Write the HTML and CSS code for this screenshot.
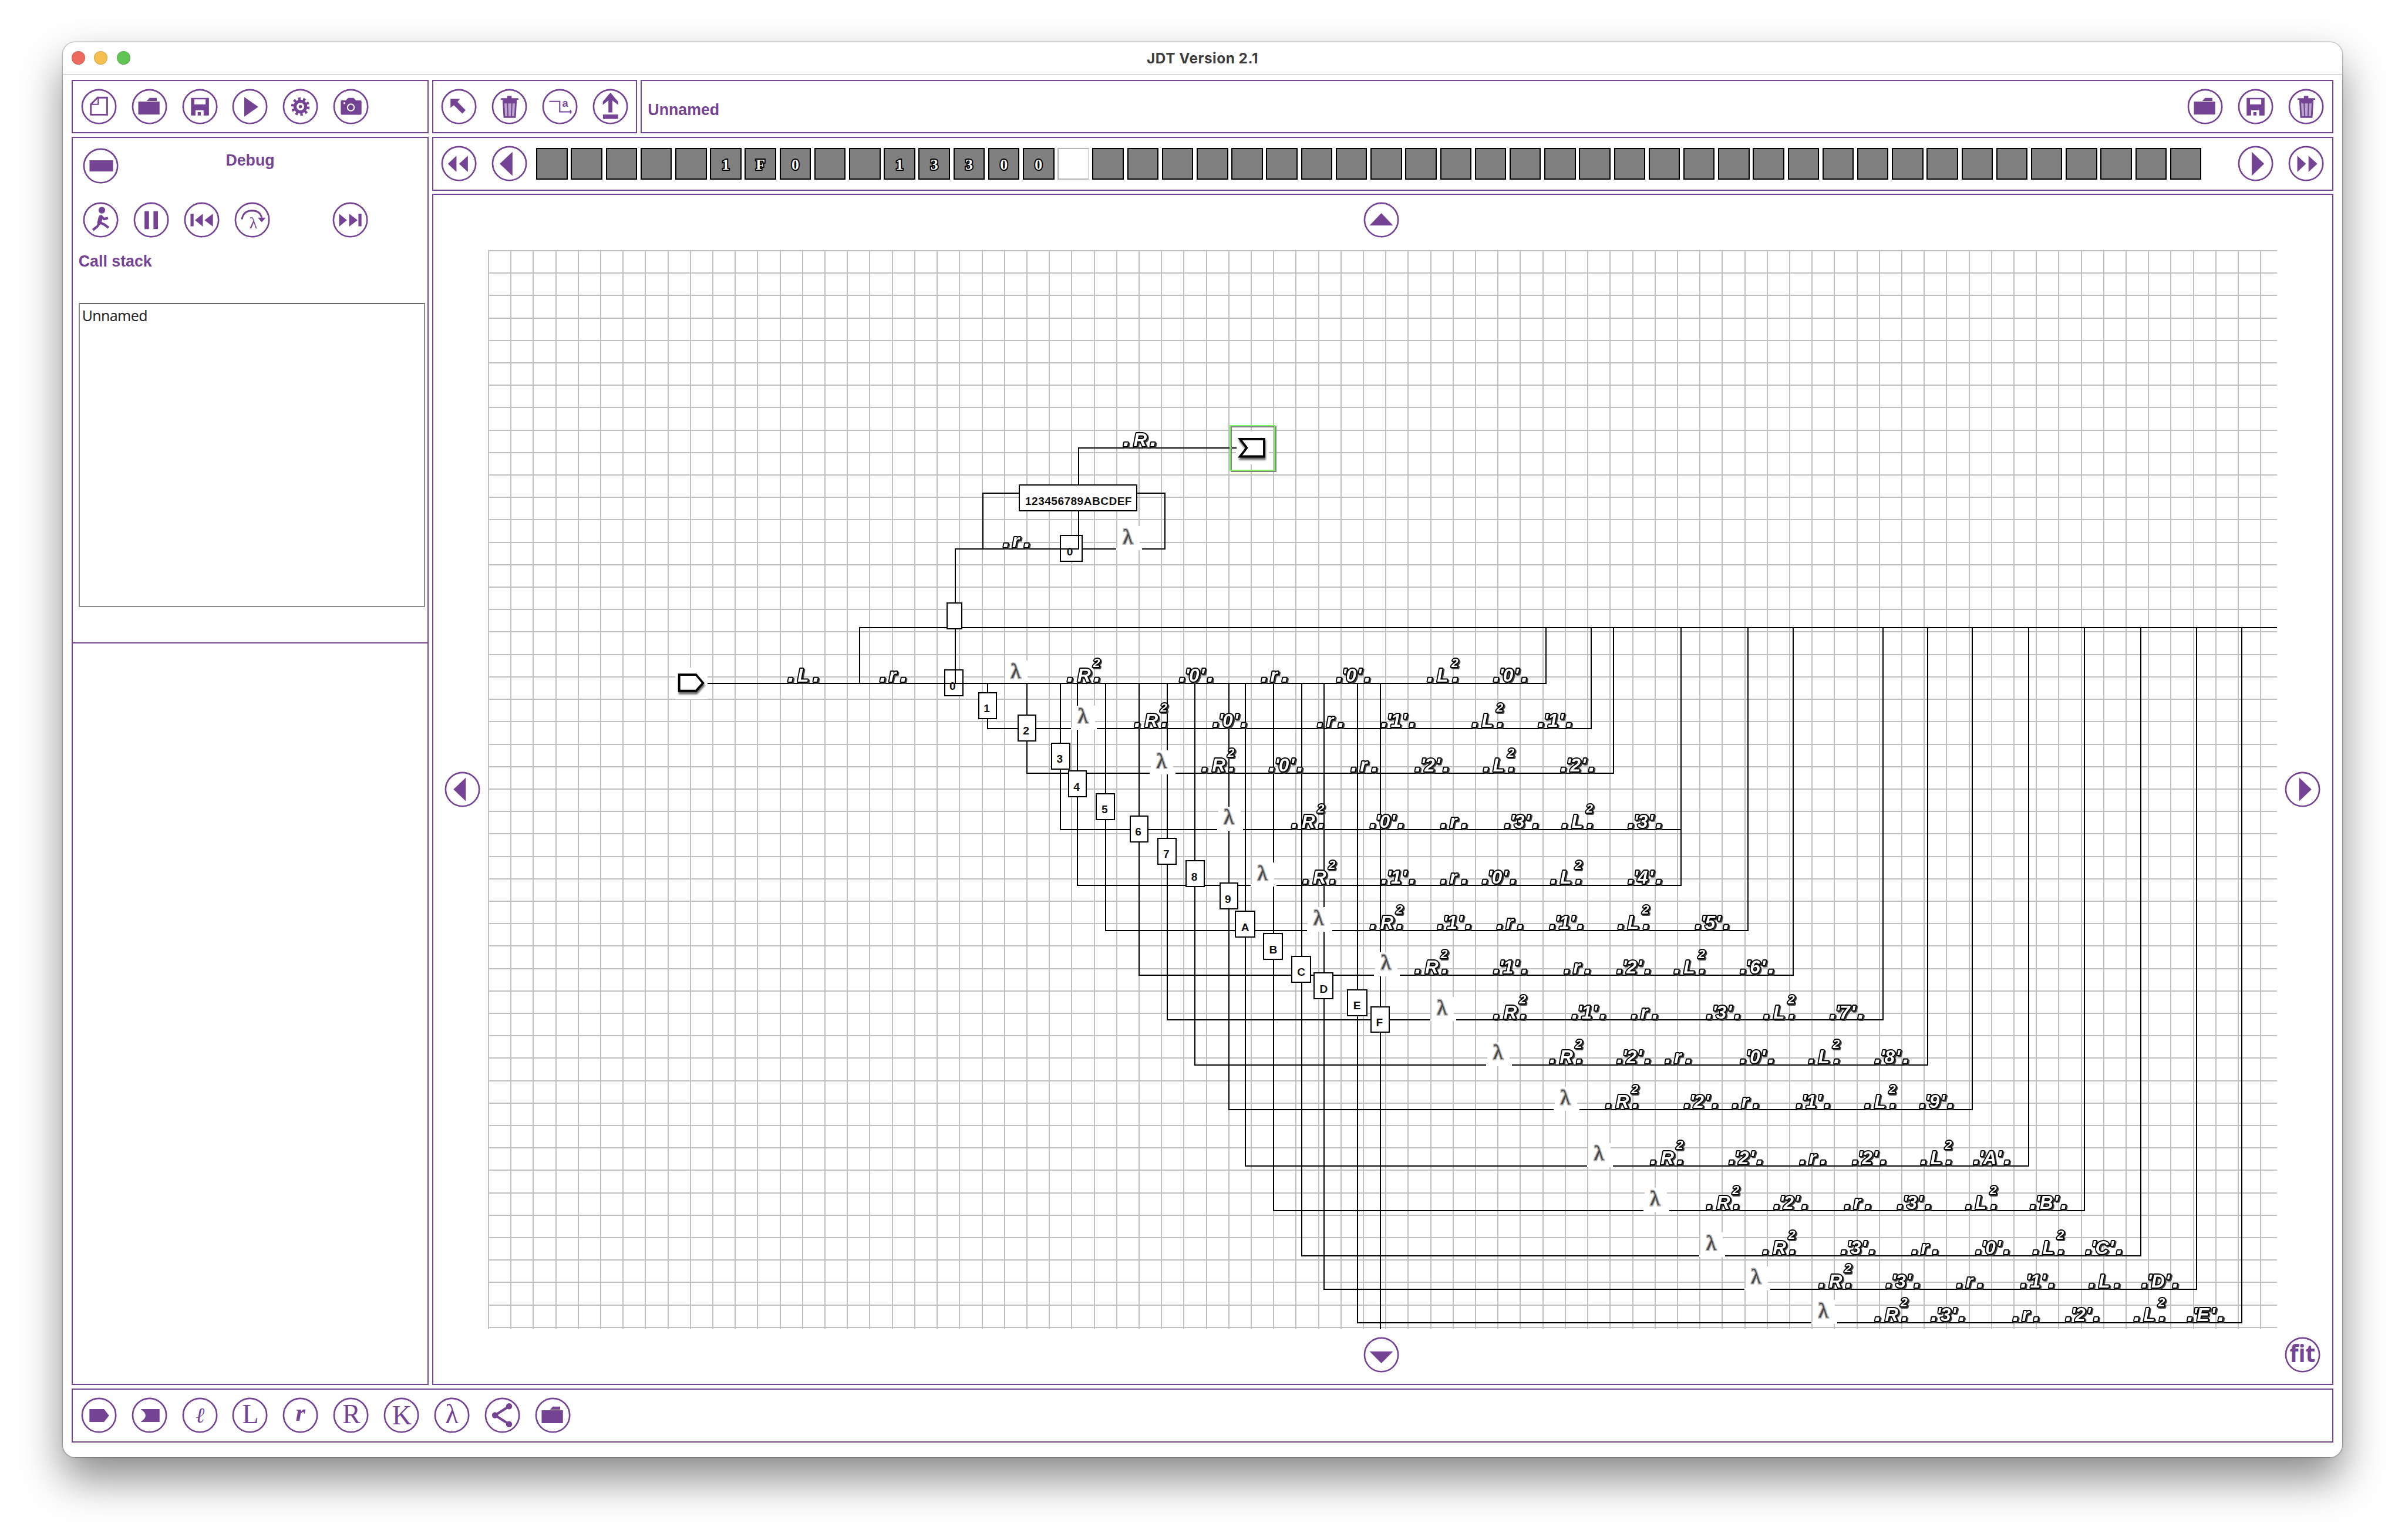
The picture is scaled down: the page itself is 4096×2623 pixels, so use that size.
FILE: index.html
```html
<!DOCTYPE html>
<html lang="en">
<head>
<meta charset="utf-8">
<title>JDT Version 2.1</title>
<link rel="stylesheet" href="styles.css">
</head>
<body>
<svg class="sprite" aria-hidden="true">
  <symbol id="i-new" viewBox="0 0 64 64"><path class="ln" d="M29.500 16H46.500V46.500H17.500V28Z"/><path class="ln thin" d="M30.500 16V28H18"/></symbol>
  <symbol id="i-folder" viewBox="0 0 64 64"><path d="M12 23H50V46H12Z"/><path d="M27 22L32 16.500H45V22Z"/></symbol>
  <symbol id="i-save" viewBox="0 0 64 64"><path fill-rule="evenodd" d="M16 16.500H48V48H38.500V38.500H24V48H16ZM22 19V28H42V19Z"/><path d="M28 42H33.500V48H28Z"/></symbol>
  <symbol id="i-play" viewBox="0 0 64 64"><path d="M22 15L47 32.500L22 50Z"/></symbol>
  <symbol id="i-gear" viewBox="0 0 64 64"><circle cx="32" cy="32" r="14" fill="none" stroke="currentColor" stroke-width="5" stroke-dasharray="4.4 4.396"/><circle cx="32" cy="32" r="9.500" fill="none" stroke="currentColor" stroke-width="5.500"/><circle cx="32" cy="32" r="3"/></symbol>
  <symbol id="i-camera" viewBox="0 0 64 64"><path d="M16 21H23L27 16.500H37L41 21H49Q51 21 51 23V44Q51 46.500 49 46.500H16Q14 46.500 14 44V23Q14 21 16 21Z"/><circle cx="32" cy="33.500" r="6" fill="none" stroke="#fff" stroke-width="2.200"/><circle cx="20.500" cy="26" r="1.800" fill="#fff"/></symbol>
  <symbol id="i-cursor" viewBox="0 0 64 64"><path d="M17 18H34L29.500 23.500L44 38.500L38 44.500L23 29.500L17 34Z"/></symbol>
  <symbol id="i-trash" viewBox="0 0 64 64"><path d="M28 12.700H36V17H28ZM17 17H48V20H17ZM20 20H45V25H20Z"/><path d="M21.500 25H43.500L42 50.500H23Z" fill="#bda6cd" stroke="currentColor" stroke-width="3"/><path class="ln thin" d="M28.500 25L29.500 50M36.500 25L35.500 50"/></symbol>
  <symbol id="i-link" viewBox="0 0 64 64"><path class="ln thin" d="M13 22.700H31.700V41.300H53M51 38V44.500"/><text x="36" y="32.300" font-family="Liberation Sans" font-size="19" font-weight="bold">a</text></symbol>
  <symbol id="i-up" viewBox="0 0 64 64"><path d="M32 7L45.700 23V29L35.500 21V42.300H28.500V21L18.500 29V23ZM18.700 46H45.700V54H18.700Z"/></symbol>
  <symbol id="i-rew" viewBox="0 0 64 64"><path d="M12.300 32.500L27.700 18V47ZM32.300 32.500L48 18V47Z"/></symbol>
  <symbol id="i-prev" viewBox="0 0 64 64"><path d="M14.700 32.500L37.500 11V54Z"/></symbol>
  <symbol id="i-next" viewBox="0 0 64 64"><path d="M47.300 32.500L25 11V54Z"/></symbol>
  <symbol id="i-ff" viewBox="0 0 64 64"><path d="M31.700 32.500L16.300 18V47ZM52 32.500L36.300 18V47Z"/></symbol>
  <symbol id="i-minus" viewBox="0 0 64 64"><path d="M12 22H54V42H12Z"/></symbol>
  <symbol id="i-run" viewBox="0 0 64 64"><circle cx="34" cy="14.700" r="6"/><path class="ln torso" d="M32 27L29.500 37"/><path class="ln limb" d="M33 26L38 30.500L45 28.500M29.500 38L26 43.500L18 50M30 36.500L38 40L46 46"/></symbol>
  <symbol id="i-pause" viewBox="0 0 64 64"><path d="M20 16.500H28V48.500H20ZM36 16.500H44V48.500H36Z"/></symbol>
  <symbol id="i-first" viewBox="0 0 64 64"><path d="M12 21H17.500V43.500H12ZM20 32.500L34 21V44ZM37 32.500L52 21V44Z"/></symbol>
  <symbol id="i-last" viewBox="0 0 64 64"><path d="M52 21H46.500V43.500H52ZM26 32.500L12 21V44ZM45 32.500L30 21V44Z"/></symbol>
  <symbol id="i-over" viewBox="0 0 64 64"><path class="ln" d="M13.700 31Q16 15.500 32 15.500Q47 16 49 29"/><path d="M42 28H56L49 36Z"/><text x="27" y="47" font-family="Liberation Serif" font-size="29">λ</text></symbol>
  <symbol id="i-north" viewBox="0 0 64 64"><path d="M11 42L32 20L53 42Z"/></symbol>
  <symbol id="i-south" viewBox="0 0 64 64"><path d="M11 26L32 47L53 26Z"/></symbol>
  <symbol id="i-west" viewBox="0 0 64 64"><path d="M16 32L38 11V53Z"/></symbol>
  <symbol id="i-east" viewBox="0 0 64 64"><path d="M48 32L26 11V53Z"/></symbol>
  <symbol id="i-fit" viewBox="0 0 64 64"><text x="32" y="45" text-anchor="middle" font-family="Open Sans" font-size="43" font-weight="700" textLength="46" lengthAdjust="spacingAndGlyphs">fit</text></symbol>
  <symbol id="i-start" viewBox="0 0 64 64"><path d="M15 21H41L50 32.500L41 44H15Z"/></symbol>
  <symbol id="i-end" viewBox="0 0 64 64"><path d="M16 21H50V44H16Q25 38 25 32.500Q25 27 16 21Z"/></symbol>
  <symbol id="i-l" viewBox="0 0 64 64"><text x="32" y="45.500" text-anchor="middle" font-family="DejaVu Serif" font-style="italic" font-size="38">ℓ</text></symbol>
  <symbol id="i-L" viewBox="0 0 64 64"><text class="gl" x="33" y="46">L</text></symbol>
  <symbol id="i-r" viewBox="0 0 64 64"><text x="32" y="42" text-anchor="middle" font-family="Liberation Serif" font-size="44" font-weight="bold" font-style="italic">r</text></symbol>
  <symbol id="i-R" viewBox="0 0 64 64"><text class="gl" x="33" y="46">R</text></symbol>
  <symbol id="i-K" viewBox="0 0 64 64"><text class="gl" x="33" y="48">K</text></symbol>
  <symbol id="i-lambda" viewBox="0 0 64 64"><text class="gl" x="32" y="46">λ</text></symbol>
  <symbol id="i-share" viewBox="0 0 64 64"><path class="ln limb" d="M44 16L19 32L44 48"/><circle cx="19" cy="32" r="5.500"/><circle cx="44" cy="16" r="5.500"/><circle cx="44" cy="48" r="5.500"/></symbol>
</svg>

<div class="window">
  <header class="titlebar">
    <div class="lights"><i class="light red"></i><i class="light amber"></i><i class="light green"></i></div>
    <h1 class="title">JDT Version 2.1</h1>
  </header>
  <main class="content">
    <div class="columns">
      <aside class="side">
        <div class="panel bar" data-icons="new folder save play gear camera"></div>
        <section class="panel debug">
          <div class="debug-head"><span data-icons="minus"></span><h2 class="label">Debug</h2></div>
          <div class="debug-row" data-icons="run pause first over last"></div>
          <h3 class="label stack-label">Call stack</h3>
          <div class="stack">Unnamed</div>
          <div class="divider"></div>
        </section>
      </aside>
      <div class="work">
        <div class="top">
          <div class="panel bar tools" data-icons="cursor trash link up"></div>
          <div class="panel bar document"><span class="label name">Unnamed</span><div class="group" data-icons="folder save trash"></div></div>
        </div>
        <div class="panel bar tape">
          <div class="group" data-icons="rew prev"></div>
          <div class="cells" id="cells"></div>
          <div class="group end" data-icons="next ff"></div>
        </div>
        <section class="panel stage">
          <div class="nav north" data-icons="north"></div>
          <div class="nav west" data-icons="west"></div>
          <svg class="machine" id="machine" viewBox="870 446 3190 1924" preserveAspectRatio="none"></svg>
          <div class="nav east" data-icons="east"></div>
          <div class="nav south" data-icons="south"></div>
          <div class="nav fit" data-icons="fit"></div>
        </section>
      </div>
    </div>
    <div class="panel bar" data-icons="start end l L r R K lambda share folder"></div>
  </main>
</div>
<script src="script.js"></script>
</body>
</html>
```
FILE: styles.css
```css
/* 1rem equals ten design units */
html { font-size: 9.5522px; }
* { box-sizing: border-box; }
body { margin: 0; width: 4096px; height: 2623px; overflow: hidden; background: #fff; padding: 7.5rem 11.2rem 0 11.2rem; font-family: "Liberation Sans", Arial, sans-serif; }
h1, h2, h3 { margin: 0; }
.sprite { display: none; }

.window { height: 252.3rem; display: flex; flex-direction: column; background: #fff; border-radius: 2.2rem; box-shadow: 0 0 2px 1px rgba(0,0,0,.32), 0 3.8rem 7.6rem rgba(0,0,0,.46); }
.titlebar { height: 5.9rem; flex: none; display: grid; grid-template-columns: 12rem 1fr 12rem; align-items: center; background: #fefefe; border-bottom: 2px solid #dadada; border-radius: 2.2rem 2.2rem 0 0; }
.lights { display: flex; gap: 1.6rem; padding-left: 1.6rem; }
.light { width: 2.4rem; height: 2.4rem; border-radius: 50%; border: 1px solid rgba(0,0,0,.12); }
.red { background: #ec6a5e; }
.amber { background: #f5bf4f; }
.green { background: #61c554; }
.title { text-align: center; font: 700 2.55rem/1 Inter, sans-serif; letter-spacing: .055rem; color: #3c3c3c; }

.content { flex: 1; min-height: 0; display: flex; flex-direction: column; gap: .6rem; padding: .8rem 1.6rem 2.6rem; }
.columns { flex: 1; min-height: 0; display: flex; gap: .6rem; }
.side { width: 63.6rem; flex: none; display: flex; flex-direction: column; gap: .6rem; }
.work { flex: 1; min-width: 0; display: flex; flex-direction: column; gap: .6rem; }
.top { display: flex; gap: .6rem; }
.panel { border: 2px solid #744394; background: #fff; color: #744394; }
.bar { height: 9.6rem; flex: none; display: flex; align-items: center; gap: 2.6rem; padding: 0 1.4rem; }
.tools { width: 36.6rem; }
.document { flex: 1; padding-left: 1.1rem; justify-content: space-between; }
.name { padding-top: 1.26rem; }
.group { display: flex; gap: 2.6rem; }
.label { font: 700 2.8rem/1 "Liberation Sans", Arial, sans-serif; color: #744394; }

.button { display: block; flex: none; width: 6.4rem; height: 6.4rem; padding: 0; border: 0; background: none; color: #744394; }
.button svg { display: block; width: 100%; height: 100%; fill: currentColor; overflow: visible; }
.button .ring { fill: none; stroke: currentColor; stroke-width: 2.8; }
.ln { fill: none; stroke: currentColor; stroke-width: 3; }
.ln.thin { stroke-width: 2.2; }
.ln.limb { stroke-width: 4.4; stroke-linejoin: round; }
.ln.torso { stroke-width: 7.5; stroke-linecap: round; }
.gl { font: 48px "Liberation Serif", serif; text-anchor: middle; }

.debug { flex: 1; display: flex; flex-direction: column; }
.debug-head { display: grid; grid-template-columns: 6.4rem 1fr 6.4rem; padding: 1.8rem 1.8rem 0; text-align: center; }
.debug-head .label { padding-top: .8rem; }
.debug-row { display: flex; gap: 2.6rem; padding: 3.2rem 1.8rem 0; }
.debug-row .button:last-child { margin-left: 8.4rem; }
.stack-label { padding: 2.8rem 0 6rem 1rem; }
.stack { height: 54.2rem; margin: 0 .4rem 0 1rem; border: 2px solid #8c8c8c; border-top-color: #666; padding: .7rem .4rem; font: 2.6rem/1 "Noto Sans", sans-serif; letter-spacing: -.06rem; color: #262626; }
.divider { margin-top: 6.3rem; height: 2px; background: #744394; }

.tape { gap: 1.6rem; }
.cells { display: flex; gap: .6rem; }
.cell { width: 5.6rem; height: 5.6rem; border: 2px solid #000; background: #808080; color: #fff; text-align: center; font: 700 2.7rem/5.6rem "Liberation Serif", serif; -webkit-text-stroke: 4px #000; paint-order: stroke fill; }
.cell.head { border-color: #b4b4b4 #d8d8d8 #b4b4b4 #b4b4b4; background: #fff; }
.end { margin-left: auto; }

.stage { flex: 1; min-height: 0; display: grid; grid-template-columns: 9.8rem 1fr 9.8rem; grid-template-rows: 9.8rem 1fr 9.8rem; }
.nav { display: flex; align-items: center; justify-content: center; }
.north { grid-area: 1 / 2; padding: 0 .4rem .9rem 0; }
.south { grid-area: 3 / 2; padding: 0 .4rem .6rem 0; }
.west { grid-area: 2 / 1; padding-left: .6rem; }
.east { grid-area: 2 / 3; padding-right: .8rem; }
.fit { grid-area: 3 / 3; padding: 0 .8rem .6rem 0; }
.machine { grid-area: 2 / 2; width: 100%; height: 100%; display: block; }

.grid-line { fill: none; stroke: #c0c0c0; stroke-width: 2.1; shape-rendering: crispEdges; }
.wire { fill: none; stroke: #000; stroke-width: 2.1; shape-rendering: crispEdges; }
.gap { fill: #fff; shape-rendering: crispEdges; }
.box { fill: #fff; stroke: #000; stroke-width: 2.1; shape-rendering: crispEdges; }
.box-text { font: 700 20px "Liberation Sans", Arial, sans-serif; fill: #111; }
.lambda { font: 37px "Liberation Serif", serif; fill: #444; stroke: #b0b0b0; stroke-width: 3.6; paint-order: stroke; }
.tokens { filter: drop-shadow(2.8px 2.8px 0 #404040); }
.token { font: italic 700 33px "Liberation Sans", Arial, sans-serif; fill: #fff; stroke: #000; stroke-width: 4; stroke-linejoin: round; paint-order: stroke; }
.dot { font-size: 44px; }
.power { font-size: 22px; }
.node { fill: #fff; stroke: #000; stroke-width: 4; filter: drop-shadow(1.5px 4px 1.5px rgba(0,0,0,.6)); }
.select { fill: none; stroke: #7cf85c; stroke-width: 2.1; shape-rendering: crispEdges; }
.select-shade { fill: none; stroke: #808080; stroke-width: 2.1; shape-rendering: crispEdges; }
```
FILE: script.js
```js
// Toolbar buttons
document.querySelectorAll('[data-icons]').forEach(function (host) {
  host.innerHTML += host.dataset.icons.split(' ').map(function (n) {
    return '<button class="button"><svg viewBox="0 0 64 64"><circle class="ring" cx="32" cy="32" r="30"/><use href="#i-' + n + '"/></svg></button>';
  }).join('');
});

// Tape: 48 cells, the head is on cell 15
var tape = '     1F0  13300'.split('');
var cells = '';
for (var i = 0; i < 48; i++) {
  cells += '<div class="cell' + (i === 15 ? ' head' : '') + '">' + (tape[i] || '').trim() + '</div>';
}
document.getElementById('cells').innerHTML = cells;

// Machine diagram
var back = '', wires = '', covers = '', boxes = '', tokens = '';
var g = '';
for (var x = 871; x < 4060; x += 40) g += 'M' + x + ' 446V2370';
for (var y = 447; y < 2370; y += 40) g += 'M870 ' + y + 'H4060';
back += '<path class="grid-line" d="' + g + '"/>';

function lambda(x, y, cut) {
  covers += '<rect class="gap" x="' + x + '" y="' + (y - 41) + '" width="40" height="40"/>';
  if (cut) covers += '<rect class="gap" x="' + (x - 2) + '" y="' + (y - 2) + '" width="46" height="4"/>';
  covers += '<text class="lambda" x="' + (x + 10) + '" y="' + (y - 10) + '">λ</text>';
}
function box(ch, x, y, w, tx) {
  return '<rect class="box" x="' + (x + 1) + '" y="' + (y + 1) + '" width="' + (w - 2) + '" height="46"/>' + label(ch, x + tx, y + 36);
}
function label(ch, x, y) {
  return '<text class="box-text" x="' + x + '" y="' + y + '">' + ch + '</text>';
}
function token(t, x, y) {
  var power = t.length > 1 && t[1] === '^', c = t[0], off, body;
  var b = y - 3;
  if (c === "'") {
    var d = /[A-E]/.test(t[1]) ? 5 : 0;
    body = "'" + t[1] + "'";
    off = [10, 17, 37 + d, 50 + d];
  } else {
    body = c;
    off = c === 'R' ? [18, 48] : c === 'L' ? [17, 45] : [16, 37];
  }
  var end = off.pop();
  tokens += '<text class="token" y="' + b + '"><tspan class="dot" x="' + (x - .5) + '">.</tspan><tspan x="' +
    off.map(function (o) { return x + o; }).join(' ') + '">' + body + '</tspan><tspan class="dot" x="' + (x + end - .5) + '">.</tspan></text>';
  if (power) tokens += '<text class="token power" x="' + (x + (c === 'R' ? 46 : 43)) + '" y="' + (b - 27) + '">2</text>';
}

// label, column x, row y, box x, box y, box width, right end, lambda x, tokens
var rows = [
  ['0', 0, 1219, 0, 0, 0, 2757, 1792, "L 1405 r 1569 R^ 1903 '0 2103 r 2249 '0 2383 L^ 2545 '0 2663"],
  ['1', 1761, 1299, 1744, 1234, 34, 2837, 1912, "R^ 2023 '0 2163 r 2349 '1 2463 L^ 2625 '1 2743"],
  ['2', 1831, 1379, 1814, 1274, 34, 2877, 2052, "R^ 2143 '0 2263 r 2409 '2 2523 L^ 2645 '2 2783"],
  ['3', 1891, 1479, 1874, 1324, 34, 2997, 2172, "R^ 2303 '0 2443 r 2569 '3 2683 L^ 2785 '3 2903"],
  ['4', 1921, 1579, 1904, 1374, 34, 2997, 2232, "R^ 2323 '1 2463 r 2569 '0 2643 L^ 2765 '4 2903"],
  ['5', 1971, 1659, 1954, 1414, 34, 3117, 2332, "R^ 2443 '1 2563 r 2669 '1 2763 L^ 2885 '5 3023"],
  ['6', 2031, 1739, 2014, 1454, 34, 3197, 2452, "R^ 2523 '1 2663 r 2789 '2 2883 L^ 2985 '6 3103"],
  ['7', 2081, 1819, 2064, 1494, 34, 3357, 2552, "R^ 2663 '1 2803 r 2909 '3 3043 L^ 3145 '7 3263"],
  ['8', 2131, 1899, 2114, 1534, 34, 3437, 2652, "R^ 2763 '2 2883 r 2969 '0 3103 L^ 3225 '8 3343"],
  ['9', 2191, 1979, 2174, 1574, 34, 3517, 2772, "R^ 2863 '2 3003 r 3089 '1 3203 L^ 3325 '9 3423"],
  ['A', 2221, 2079, 2202, 1624, 36, 3617, 2832, "R^ 2943 '2 3083 r 3209 '2 3303 L^ 3425 'A 3519"],
  ['B', 2271, 2159, 2252, 1664, 36, 3717, 2932, "R^ 3043 '2 3163 r 3289 '3 3383 L^ 3505 'B 3620"],
  ['C', 2321, 2239, 2302, 1704, 36, 3817, 3032, "R^ 3143 '3 3283 r 3409 '0 3523 L^ 3625 'C 3719"],
  ['D', 2361, 2299, 2342, 1734, 36, 3917, 3112, "R^ 3243 '3 3363 r 3489 '1 3603 L 3725 'D 3819"],
  ['E', 2421, 2359, 2402, 1764, 36, 3997, 3232, "R^ 3343 '3 3443 r 3589 '2 3683 L^ 3805 'E 3900"]
];
back += '<rect class="box" x="1685" y="1195" width="32" height="46"/><rect class="box" x="1891" y="955" width="38" height="46"/>';
var w = 'M1262 1219H2757V1119M1533 1219V1119H4060M1703 1219V979H1923V912M1753 979V879H1816M2028 879H2077V979H1930M1923 864V799H2204M2461 1219V2370';
rows.forEach(function (r, n) {
  if (n) {
    w += 'M' + r[1] + ' 1219V' + r[2] + 'H' + r[6] + 'V1119';
    boxes += box(r[0], r[3], r[4], r[5], n < 10 ? 10 : 11);
  }
  lambda(r[7], r[2], n > 0);
  var p = r[8].split(' ');
  for (var k = 0; k < p.length; k += 2) token(p[k], +p[k + 1], r[2]);
});
boxes += box('F', 2444, 1794, 34, 9.5) + '<rect class="box" x="1689" y="1075" width="26" height="46"/>';
boxes += '<rect class="box" x="1817" y="865" width="210" height="46"/><text class="box-text" x="1828" y="900" textLength="190">123456789ABCDEF</text>';
boxes += label('0', 1693, 1230) + label('0', 1902, 990);
lambda(1992, 979, true);
token('r', 1789, 979);
token('R', 2003, 799);
wires = '<path class="wire" d="' + w + '"/>';
var nodes = '<rect class="gap" x="1204" y="1190" width="58" height="57"/><path class="node" d="M1211 1203H1241L1253.5 1218L1241 1232H1211Z"/>' +
  '<rect class="gap" x="2204" y="770" width="58" height="58"/><path class="wire" d="M2192 799H2205"/><path class="node" d="M2211 783H2254V814H2211L2223 798.5Z"/>' +
  '<rect class="select-shade" x="2195" y="761" width="80" height="80"/><rect class="select" x="2193" y="759" width="80" height="80"/>';
document.getElementById('machine').innerHTML = back + wires + covers + boxes + '<g class="tokens">' + tokens + '</g>' + nodes;
```
